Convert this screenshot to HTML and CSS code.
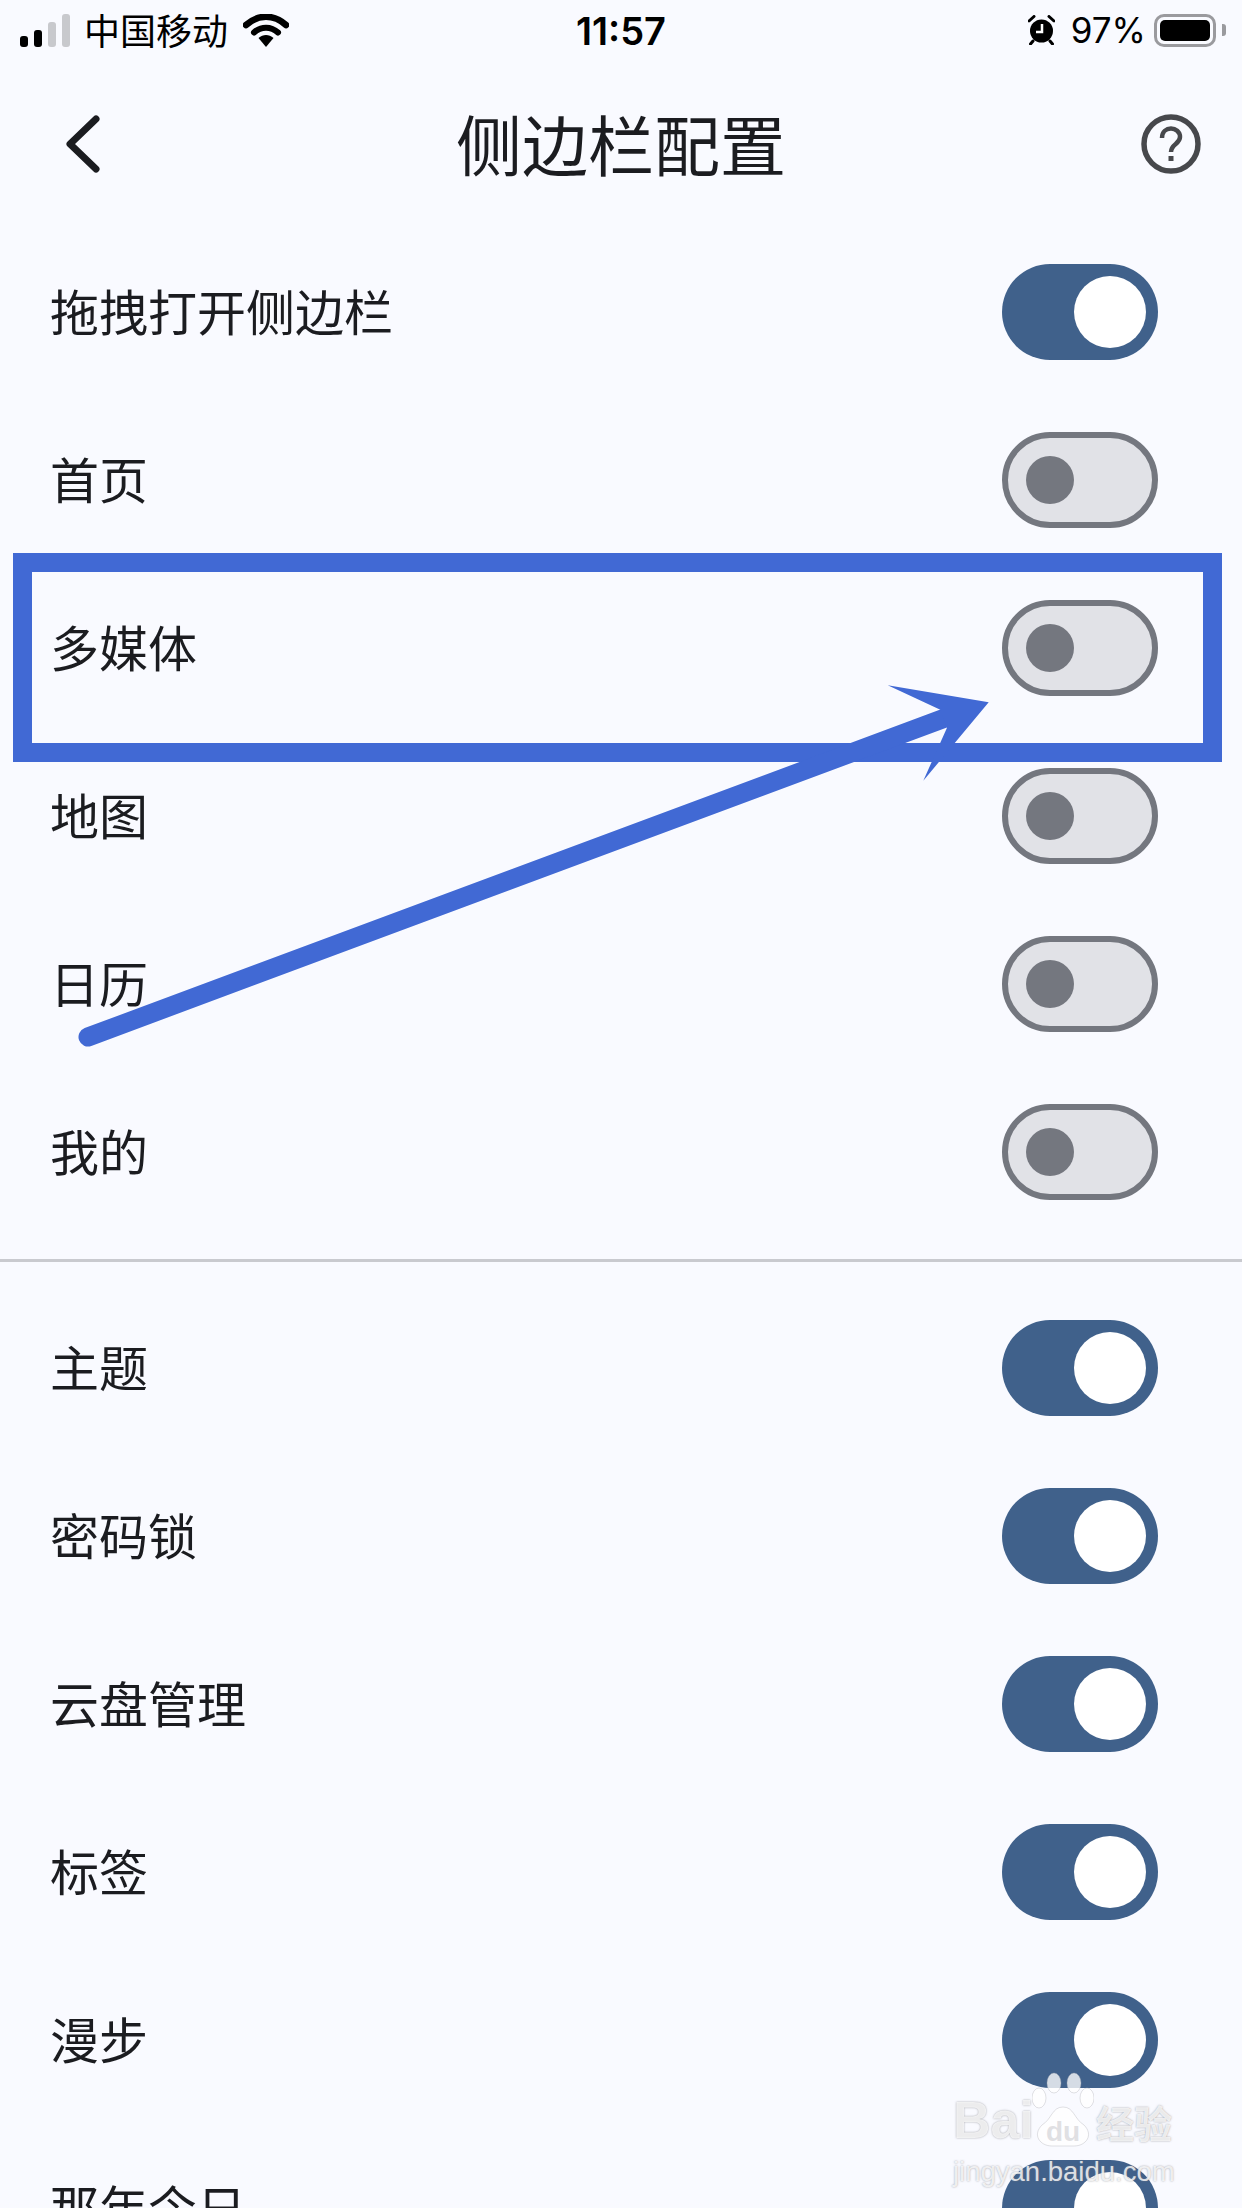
FILE: index.html
```html
<!DOCTYPE html>
<html lang="en">
<head>
    <meta charset="UTF-8">
    <meta name="viewport" content="width=device-width, initial-scale=1.0">
    <title>侧边栏配置</title>
    <link rel="stylesheet" href="styles.css">
</head>
<body>
    <div class="page">
        <div class="status-bar">
            <div class="status-left">
                <div class="signal">
                    <span class="bar bar-1"></span>
                    <span class="bar bar-2"></span>
                    <span class="bar bar-3"></span>
                    <span class="bar bar-4"></span>
                </div>
                <span class="carrier">中国移动</span>
                <svg class="wifi" width="46" height="33" viewBox="0 0 46 33">
                    <path d="M3 11 C15 0 31 0 43 11" fill="none" stroke="#000" stroke-width="6.5" stroke-linecap="round"/>
                    <path d="M11 18.5 C18 12 28 12 35 18.5" fill="none" stroke="#000" stroke-width="6" stroke-linecap="round"/>
                    <path d="M15.5 24 C20 20 26 20 30.5 24 L23 33 Z" fill="#000"/>
                </svg>
            </div>
            <div class="status-time">11:57</div>
            <div class="status-right">
                <svg class="alarm" width="27" height="30" viewBox="0 0 27 30">
                    <circle cx="13.5" cy="16" r="11.5" fill="#000"/>
                    <path d="M1 6 L6 1.5 M26 6 L21 1.5 M5 26 L2.5 29 M22 26 L24.5 29" stroke="#000" stroke-width="3" stroke-linecap="round"/>
                    <path d="M14 9 V17 H8" fill="none" stroke="#fff" stroke-width="2.5"/>
                </svg>
                <span class="battery-text">97%</span>
                <div class="battery"><div class="battery-level"></div></div>
                <div class="battery-nub"></div>
            </div>
        </div>

        <div class="nav-bar">
            <div class="nav-left">
                <svg width="36" height="58" viewBox="0 0 36 58">
                    <path d="M31 4 L5 29 L31 54" fill="none" stroke="#1b1c20" stroke-width="7" stroke-linecap="round" stroke-linejoin="round"/>
                </svg>
            </div>
            <h1 class="nav-title">侧边栏配置</h1>
            <div class="nav-right">
                <svg width="60" height="60" viewBox="0 0 60 60">
                    <circle cx="30" cy="30" r="27" fill="none" stroke="#47484c" stroke-width="5.5"/>
                    <path d="M21 24 C21 11 39 12 39 23 C39 30 30 30 30 38" fill="none" stroke="#47484c" stroke-width="4.5"/>
                    <rect x="27.5" y="42" width="5" height="5" fill="#47484c"/>
                </svg>
            </div>
        </div>

        <div class="group">
            <div class="row"><span class="label">拖拽打开侧边栏</span><div class="toggle on"><span class="knob"></span></div></div>
            <div class="row"><span class="label">首页</span><div class="toggle off"><span class="knob"></span></div></div>
            <div class="row"><span class="label">多媒体</span><div class="toggle off"><span class="knob"></span></div></div>
            <div class="row"><span class="label">地图</span><div class="toggle off"><span class="knob"></span></div></div>
            <div class="row"><span class="label">日历</span><div class="toggle off"><span class="knob"></span></div></div>
            <div class="row"><span class="label">我的</span><div class="toggle off"><span class="knob"></span></div></div>
        </div>

        <div class="divider"></div>

        <div class="group">
            <div class="row"><span class="label">主题</span><div class="toggle on"><span class="knob"></span></div></div>
            <div class="row"><span class="label">密码锁</span><div class="toggle on"><span class="knob"></span></div></div>
            <div class="row"><span class="label">云盘管理</span><div class="toggle on"><span class="knob"></span></div></div>
            <div class="row"><span class="label">标签</span><div class="toggle on"><span class="knob"></span></div></div>
            <div class="row"><span class="label">漫步</span><div class="toggle on"><span class="knob"></span></div></div>
            <div class="row"><span class="label">那年今日</span><div class="toggle on"><span class="knob"></span></div></div>
        </div>

        <!-- annotation drawn over the list -->
        <div class="highlight-box"></div>
        <svg class="arrow" width="1242" height="2208" viewBox="0 0 1242 2208">
            <line x1="88" y1="1037" x2="945" y2="718" stroke="#4169d4" stroke-width="19" stroke-linecap="round"/>
            <polygon points="988.7,702.3 887.7,685.3 940.3,709.7 947,727.7 923.3,780.7" fill="#4169d4"/>
        </svg>

        <div class="watermark">
            <div class="wm-logo">
                <span class="wm-bai">Bai</span>
                <svg class="wm-paw" width="62" height="76" viewBox="0 0 62 76">
                    <ellipse cx="22" cy="12" rx="7" ry="10"/>
                    <ellipse cx="42" cy="12" rx="7" ry="10"/>
                    <ellipse cx="7" cy="27" rx="7" ry="10"/>
                    <ellipse cx="55" cy="27" rx="7" ry="10"/>
                    <path d="M31 36 C42 36 42 48 52 54 C62 64 54 75 42 75 L20 75 C8 75 0 64 10 54 C20 48 20 36 31 36 Z"/>
                    <text x="31" y="70" text-anchor="middle" class="wm-du">du</text>
                </svg>
                <span class="wm-jy">经验</span>
            </div>
            <div class="wm-url">jingyan.baidu.com</div>
        </div>
    </div>
</body>
</html>
```

FILE: styles.css
```css
html, body {
    margin: 0;
    padding: 0;
}
body {
    background-color: #f9faff;
    font-family: "Noto Sans CJK SC", "Noto Sans", sans-serif;
    color: #1b1c20;
}
.page {
    position: relative;
    width: 1242px;
    height: 2208px;
    overflow: hidden;
}

/* status bar */
.status-bar {
    display: grid;
    grid-template-columns: 1fr auto 1fr;
    align-items: center;
    height: 60px;
}
.status-left {
    display: flex;
    align-items: center;
    padding-left: 20px;
}
.signal {
    display: flex;
    align-items: flex-end;
    gap: 6px;
    height: 33px;
}
.bar {
    display: block;
    width: 8px;
    border-radius: 3px;
    background-color: #000;
}
.bar-1 { height: 11px; }
.bar-2 { height: 17px; }
.bar-3 { height: 25px; background-color: #c8c9cd; }
.bar-4 { height: 33px; background-color: #c8c9cd; }
.carrier {
    margin-left: 14px;
    padding-bottom: 2px;
    font-size: 36px;
    line-height: 58px;
    color: #000;
}
.wifi {
    margin-left: 15px;
}
.status-time {
    padding-top: 2px;
    font-family: Inter, sans-serif;
    font-size: 38px;
    font-weight: 600;
    color: #000;
}
.status-right {
    display: flex;
    align-items: center;
    justify-content: flex-end;
    padding-right: 16px;
}
.battery-text {
    margin-left: 16px;
    font-family: Inter, sans-serif;
    font-size: 35px;
    color: #000;
}
.battery {
    box-sizing: border-box;
    width: 62px;
    height: 33px;
    margin-left: 8px;
    padding: 3px;
    border: 3px solid #9a9a9e;
    border-radius: 10px;
}
.battery-level {
    width: 100%;
    height: 100%;
    border-radius: 5px;
    background-color: #000;
}
.battery-nub {
    width: 4px;
    height: 12px;
    margin-left: 6px;
    border-radius: 0 3px 3px 0;
    background-color: #9a9a9e;
}

/* nav bar */
.nav-bar {
    display: grid;
    grid-template-columns: 1fr auto 1fr;
    align-items: center;
    height: 168px;
}
.nav-left {
    display: flex;
    padding-left: 65px;
}
.nav-right {
    display: flex;
    justify-content: flex-end;
    padding-right: 41px;
}
.nav-title {
    margin: 0 0 5px;
    font-size: 66px;
    font-weight: 400;
    line-height: 80px;
}

/* settings list */
.row {
    display: flex;
    align-items: center;
    justify-content: space-between;
    height: 168px;
    padding: 0 84px 0 50px;
}
.label {
    padding-bottom: 6px;
    font-size: 49px;
}
.divider {
    height: 3px;
    margin: 23px 0 22px;
    background-color: #c9cacf;
}
.toggle {
    display: flex;
    align-items: center;
    box-sizing: border-box;
    width: 156px;
    height: 96px;
    border-radius: 48px;
}
.toggle.on {
    justify-content: flex-end;
    padding-right: 12px;
    background-color: #40618b;
}
.toggle.off {
    padding-left: 18px;
    border: 6px solid #74777f;
    background-color: #e1e2e7;
}
.knob {
    display: block;
    border-radius: 50%;
}
.on .knob {
    width: 72px;
    height: 72px;
    background-color: #fff;
}
.off .knob {
    width: 48px;
    height: 48px;
    background-color: #74777f;
}

/* annotation */
.highlight-box {
    position: absolute;
    left: 13px;
    top: 553px;
    box-sizing: border-box;
    width: 1209px;
    height: 209px;
    border: 19px solid #4169d4;
}
.arrow {
    position: absolute;
    left: 0;
    top: 0;
}

/* watermark */
.watermark {
    position: absolute;
    left: 953px;
    top: 2075px;
    width: 224px;
}
.wm-logo {
    display: flex;
    align-items: flex-end;
    height: 72px;
}
.wm-bai, .wm-jy, .wm-url {
    color: rgba(255, 255, 255, 0.8);
    text-shadow: 0 0 2px rgba(120, 120, 125, 0.7);
}
.wm-bai {
    font-family: "Liberation Sans", sans-serif;
    font-size: 52px;
    font-weight: 700;
    line-height: 54px;
}
.wm-paw {
    flex: none;
    margin: 0 2px 0 -2px;
}
.wm-paw ellipse, .wm-paw path {
    fill: rgba(255, 255, 255, 0.78);
    stroke: rgba(170, 170, 175, 0.35);
    stroke-width: 1;
}
.wm-du {
    font-family: "Liberation Sans", sans-serif;
    font-size: 28px;
    font-weight: 700;
    fill: rgba(220, 220, 224, 0.9);
}
.wm-jy {
    font-size: 38px;
    font-weight: 700;
    line-height: 50px;
}
.wm-url {
    margin-top: 8px;
    font-family: "Liberation Sans", sans-serif;
    font-size: 27.5px;
    line-height: 34px;
    white-space: nowrap;
}
```
